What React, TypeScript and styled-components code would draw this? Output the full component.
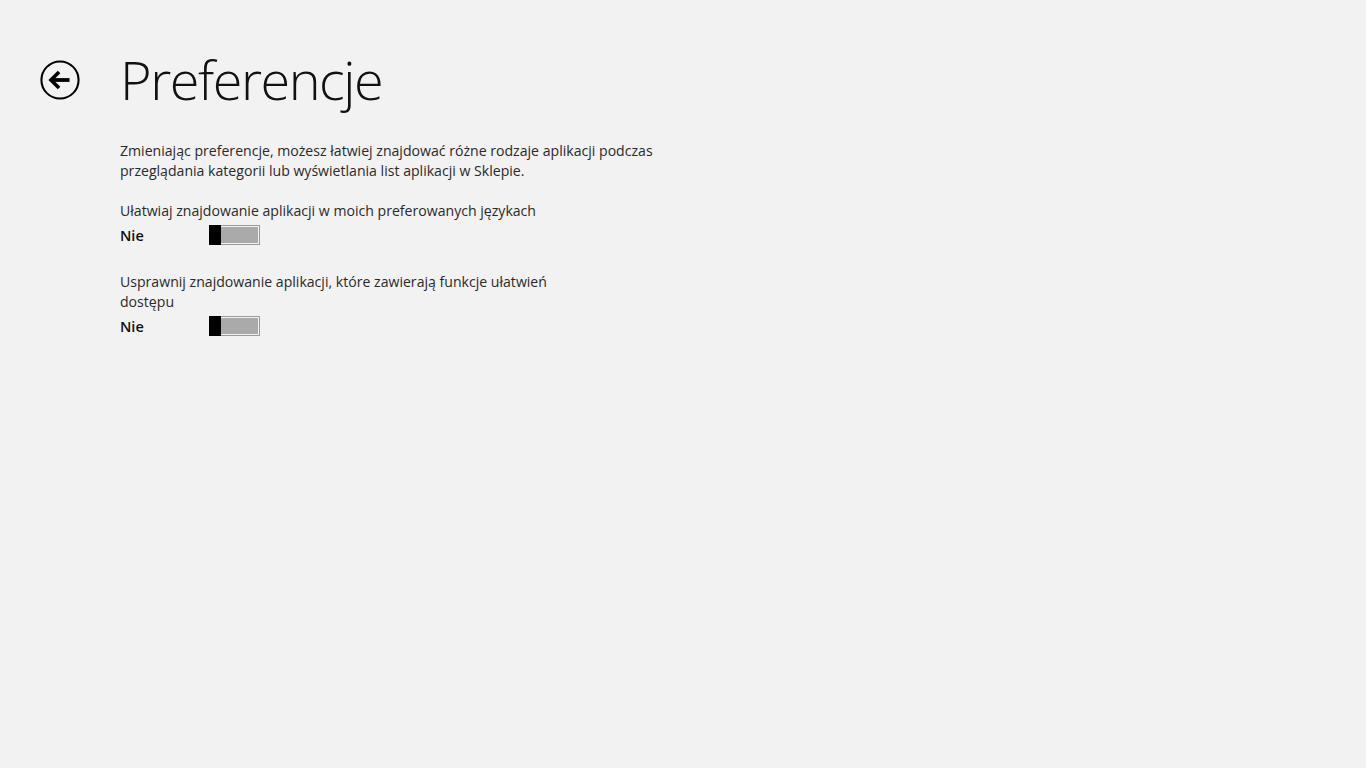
import React from "react";
import styled, { createGlobalStyle } from "styled-components";

const Global = createGlobalStyle`
  html, body { margin: 0; padding: 0; background: #f2f2f2; }
  body { font-family: "Open Sans", "Noto Sans", sans-serif; color: #222; }
`;

const Page = styled.div`
  width: 1366px;
  height: 768px;
  background: #f2f2f2;
  box-sizing: border-box;
  padding: 40px 0 0 40px;
`;

const Header = styled.header`
  display: flex;
  align-items: center;
  gap: 40px;
  height: 80px;
`;

const BackButton = styled.button`
  width: 40px;
  height: 40px;
  padding: 0;
  border: none;
  background: transparent;
  display: flex;
  align-items: center;
  justify-content: center;
  cursor: pointer;
`;

const Title = styled.h1`
  margin: 0;
  font-family: "Open Sans", sans-serif;
  font-weight: 300;
  font-size: 54px;
  letter-spacing: -1.45px;
  color: #111;
  line-height: 1;
  position: relative;
  top: -1px;
`;

const Content = styled.main`
  margin-left: 80px;
  margin-top: 21px;
  display: flex;
  flex-direction: column;
`;

const Text = styled.p`
  margin: 0;
  font-size: 14.1px;
  line-height: 20px;
  color: #2a2a2a;
  white-space: nowrap;
`;

const Section = styled.section`
  display: flex;
  flex-direction: column;
  margin-top: 20px;
`;

const Row = styled.div`
  display: flex;
  align-items: center;
  height: 28px;
  margin-bottom: 3px;
`;

const State = styled.span`
  width: 89px;
  font-size: 14.5px;
  font-weight: 600;
  color: #111;
`;

const Track = styled.div`
  width: 51px;
  height: 20px;
  box-sizing: border-box;
  border: 1px solid #9a9a9a;
  position: relative;
  background: #f2f2f2;
  padding: 1px;
`;

const Fill = styled.div`
  width: 100%;
  height: 100%;
  background: #aaaaaa;
`;

const Thumb = styled.div`
  position: absolute;
  left: -1px;
  top: -1px;
  width: 12px;
  height: 20px;
  background: #000;
`;

const Toggle = () => (
  <Track>
    <Fill />
    <Thumb />
  </Track>
);

export default function App() {
  return (
    <>
      <Global />
      <Page>
        <Header>
          <BackButton aria-label="Wstecz">
            <svg width="42" height="42" viewBox="0 0 42 42">
              <circle cx="21" cy="21" r="19.5" fill="none" stroke="#000" strokeWidth="2.2" />
              <path d="M31 21H13" stroke="#000" strokeWidth="4" fill="none" />
              <path d="M20 12.5L11.5 21L20 29.5" stroke="#000" strokeWidth="3.8" fill="none" strokeLinejoin="miter" />
            </svg>
          </BackButton>
          <Title>Preferencje</Title>
        </Header>
        <Content>
          <Text>
            Zmieniając preferencje, możesz łatwiej znajdować różne rodzaje aplikacji podczas
            <br />
            przeglądania kategorii lub wyświetlania list aplikacji w Sklepie.
          </Text>
          <Section>
            <Text>Ułatwiaj znajdowanie aplikacji w moich preferowanych językach</Text>
            <Row>
              <State>Nie</State>
              <Toggle />
            </Row>
          </Section>
          <Section>
            <Text>
              Usprawnij znajdowanie aplikacji, które zawierają funkcje ułatwień
              <br />
              dostępu
            </Text>
            <Row>
              <State>Nie</State>
              <Toggle />
            </Row>
          </Section>
        </Content>
      </Page>
    </>
  );
}
